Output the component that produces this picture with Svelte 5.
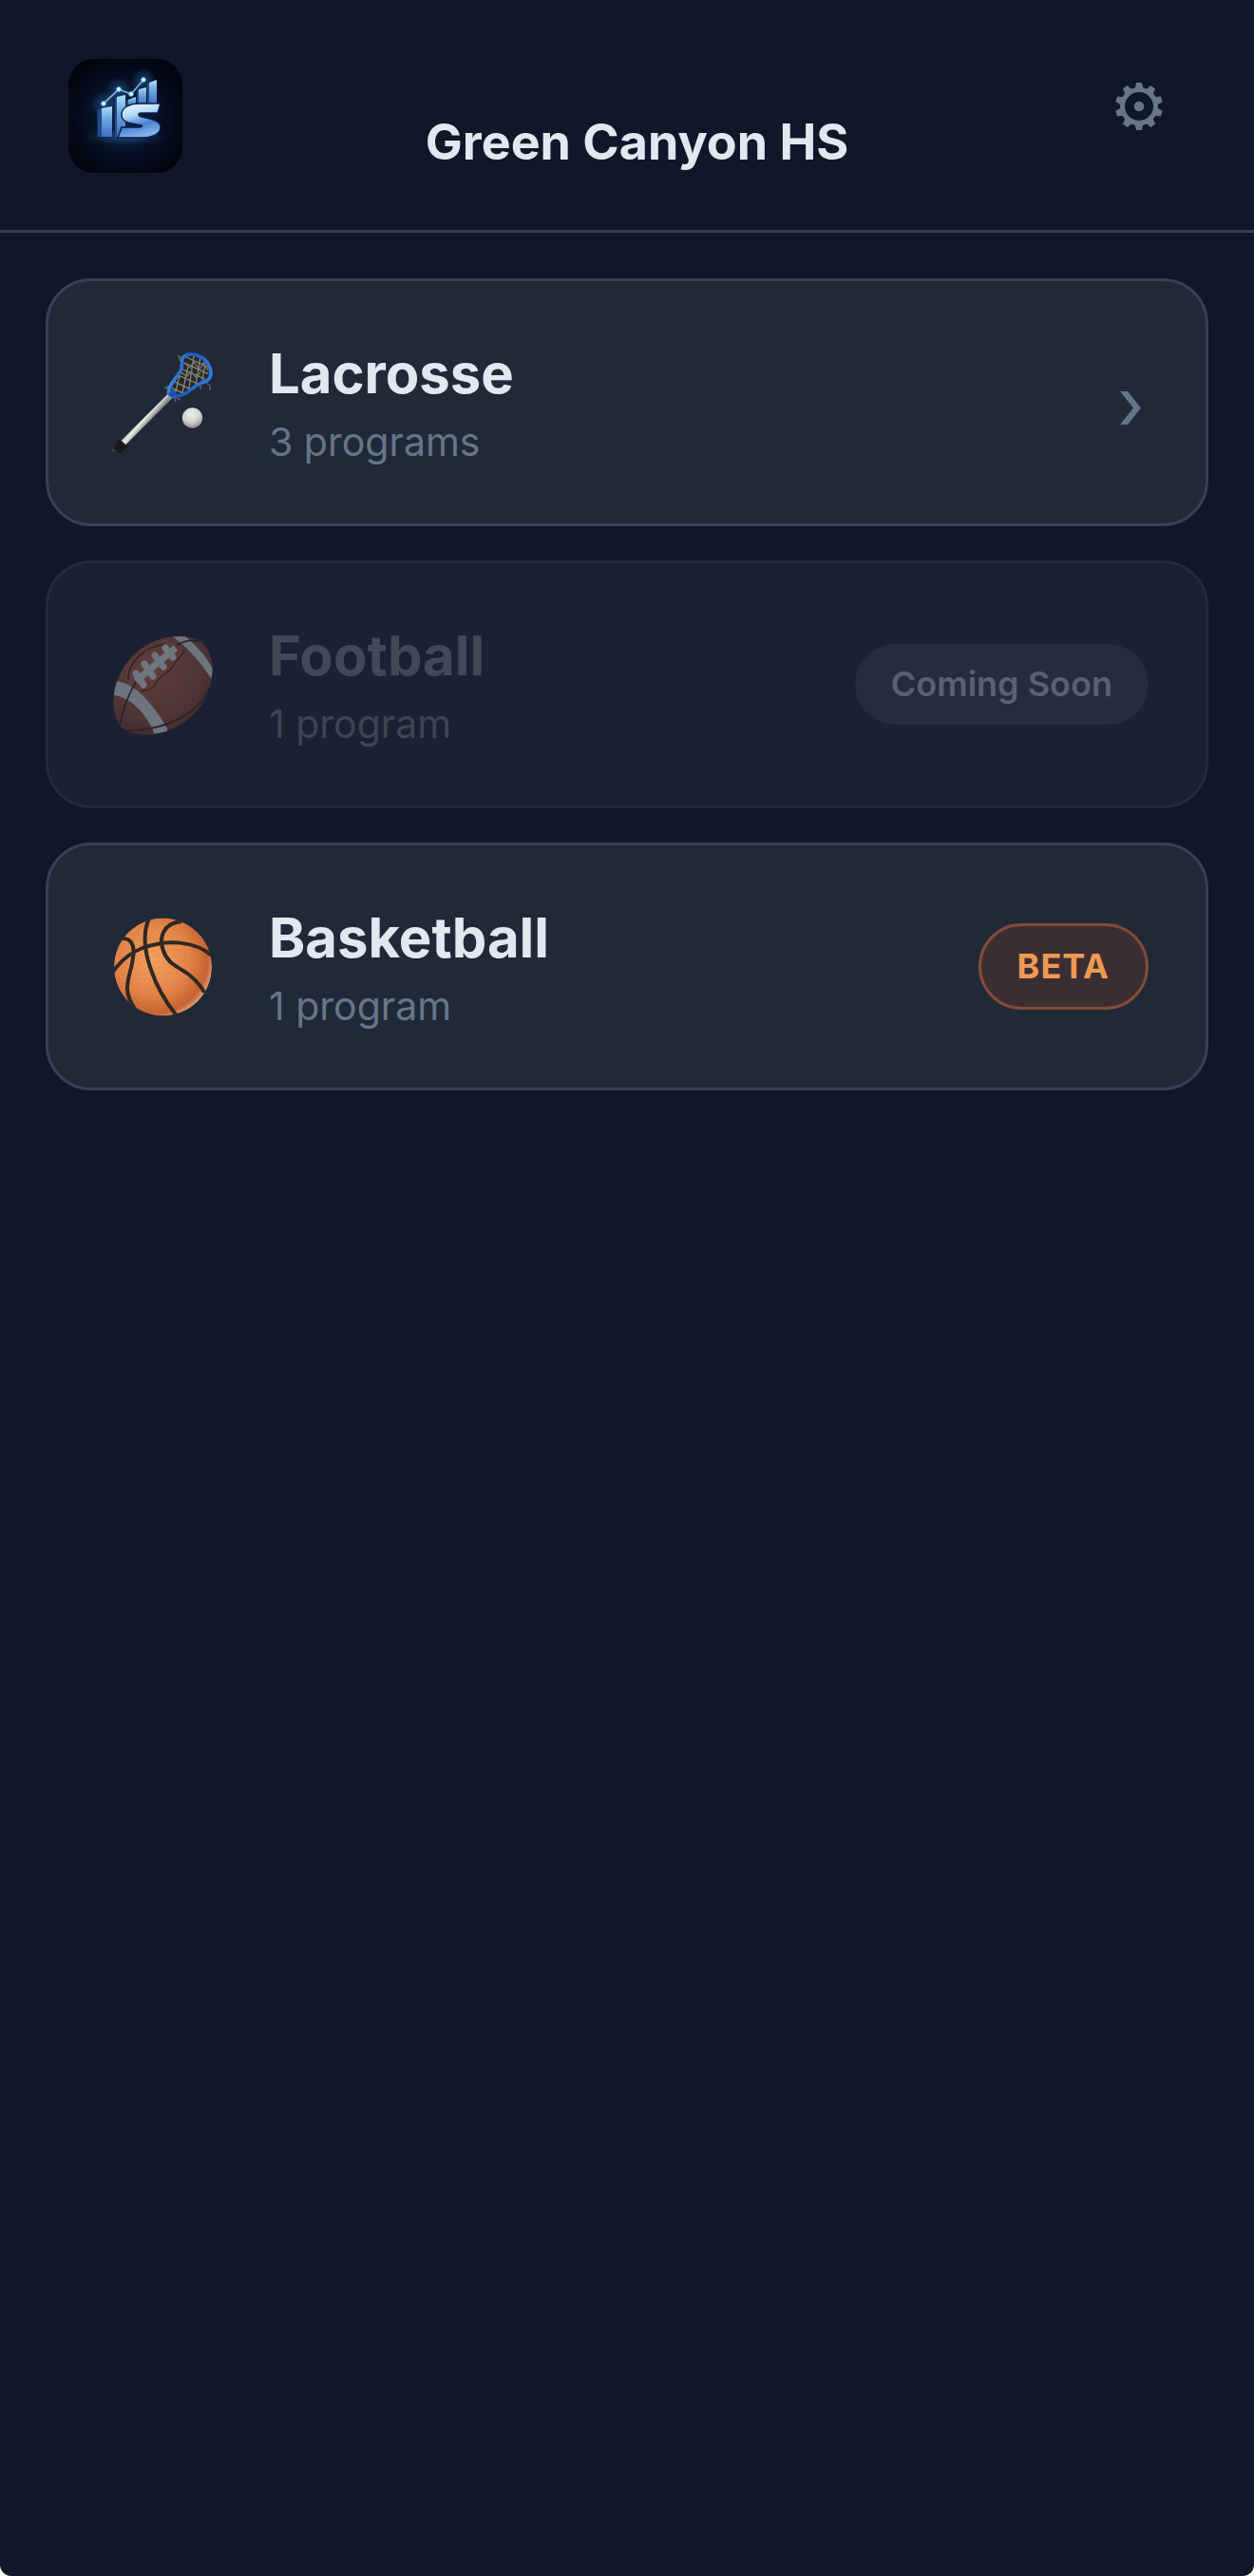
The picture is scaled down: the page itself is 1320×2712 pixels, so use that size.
<script>
  const sports = [
    { id: 'lacrosse', name: 'Lacrosse', programs: 3, status: 'open' },
    { id: 'football', name: 'Football', programs: 1, status: 'soon' },
    { id: 'basketball', name: 'Basketball', programs: 1, status: 'beta' }
  ];

  const gearTeeth = [0, 36, 72, 108, 144, 180, 216, 252, 288, 324];

  /**
   * Label under the sport name
   * @param {number} count
   */
  function programLabel(count) {
    return count === 1 ? '1 program' : `${count} programs`;
  }
</script>

<div class="app">
  <header class="header">
    <svg class="logo" viewBox="0 0 120 120" role="img" aria-label="IS logo">
      <defs>
        <radialGradient id="logo-bg" cx="50%" cy="52%" r="58%">
          <stop offset="0" stop-color="#10294f" />
          <stop offset="0.5" stop-color="#07112a" />
          <stop offset="1" stop-color="#03040d" />
        </radialGradient>
        <linearGradient id="logo-bar" x1="0" y1="0" x2="0" y2="1">
          <stop offset="0" stop-color="#b4def6" />
          <stop offset="0.4" stop-color="#6ba8e2" />
          <stop offset="1" stop-color="#3f6fbd" />
        </linearGradient>
        <linearGradient id="logo-s" x1="0" y1="0" x2="0.3" y2="1">
          <stop offset="0" stop-color="#f2fbff" />
          <stop offset="0.4" stop-color="#b5dbf7" />
          <stop offset="0.7" stop-color="#4a82cf" />
          <stop offset="1" stop-color="#7fb0e8" />
        </linearGradient>
        <radialGradient id="logo-glow">
          <stop offset="0" stop-color="#3f86d8" stop-opacity="0.4" />
          <stop offset="1" stop-color="#3f86d8" stop-opacity="0" />
        </radialGradient>
      </defs>
      <rect width="120" height="120" rx="27" fill="url(#logo-bg)" />
      <ellipse cx="60" cy="82" rx="42" ry="9" fill="url(#logo-glow)" />
      <circle cx="38" cy="48" r="15" fill="url(#logo-glow)" />
      <circle cx="53" cy="33" r="14" fill="url(#logo-glow)" />
      <circle cx="79" cy="23" r="14" fill="url(#logo-glow)" />
      <g fill="#1e4b8e">
        <path d="M30.500 54l5-2v30h-5zM49 41l3-1v40l-3 2zM61 44l2-1v8h-2zM72 33l2-1v15h-2zM83 26l2-1v22h-2z" />
      </g>
      <g fill="url(#logo-bar)">
        <path d="M35 52l11-2v32H35z" />
        <path d="M51 40l9-2v44h-9z" />
        <path d="M63 43l8-3v10h-8z" />
        <path d="M74 32l8-2v18h-8z" />
        <path d="M85 25l8-3v26h-8z" />
      </g>
      <path d="M97 47H75C63 47 55 52 56 60c1 7 9 8 19 9.500 4 .5 3 2.500-1 2.500H56l-4 11h27c11 0 18-5 18-11 0-7-9-8.500-20-11-4-1-4-4 0-4h17z" fill="url(#logo-s)" stroke="#0a1e49" stroke-width="1.500" />
      <path d="M37 47L53 32l13 5 13-15" fill="none" stroke="#69b4de" stroke-width="1.800" />
      <g fill="#d5ffff" stroke="#6cc7ee">
        <circle cx="37" cy="47" r="2.300" />
        <circle cx="53" cy="32" r="2.300" />
        <circle cx="66" cy="37" r="2.300" />
        <circle cx="79" cy="22" r="2.300" />
      </g>
    </svg>

    <h1 class="title">Green Canyon HS</h1>

    <button class="settings" type="button" aria-label="Settings">
      <svg viewBox="-26 -26 52 52" aria-hidden="true">
        {#each gearTeeth as angle}
          <path d="M-4.500-18L-3-25H3L4.500-18z" transform="rotate({angle})" />
        {/each}
        <circle class="gear-ring" r="17.500" />
        <circle r="5.300" />
      </svg>
    </button>
  </header>

  <main class="sports">
    {#each sports as sport (sport.id)}
      <button class="card" class:disabled={sport.status === 'soon'} type="button" disabled={sport.status === 'soon'}>
        <span class="icon">
          {#if sport.id === 'lacrosse'}
            <svg viewBox="1 3 140 140" aria-hidden="true">
              <defs>
                <linearGradient id="shaft" gradientUnits="userSpaceOnUse" x1="50" y1="87" x2="57" y2="93">
                  <stop offset="0" stop-color="#b8b8bc" />
                  <stop offset="0.35" stop-color="#eeeeef" />
                  <stop offset="1" stop-color="#8b898c" />
                </linearGradient>
                <linearGradient id="head" x1="0" y1="0" x2="1" y2="0.3">
                  <stop offset="0" stop-color="#58aafa" />
                  <stop offset="0.5" stop-color="#1c57bd" />
                  <stop offset="1" stop-color="#317be3" />
                </linearGradient>
                <radialGradient id="ball" cx="45%" cy="30%" r="70%">
                  <stop offset="0" stop-color="#f0eff0" />
                  <stop offset="0.6" stop-color="#d2d0d0" />
                  <stop offset="1" stop-color="#8d8b8d" />
                </radialGradient>
                <clipPath id="net">
                  <path d="M96 23c8-2 18 3 22 11 3 7 2 13-3 15-9 3-14 11-22 14-5 1-11 0-12-5-1-8 12-16 13-25 1-4-1-8 2-10z" />
                </clipPath>
              </defs>
              <path d="M22 120l-3 4" stroke="#424b59" stroke-width="3" />
              <path d="M25 114l8 5-7 6-5-4z" fill="#191919" stroke="#191919" stroke-width="3" />
              <path d="M30 115L80 65" stroke="url(#shaft)" stroke-width="6.500" />
              <path d="M90 30l-2-6 4 2M91 36l-2-3M79 60l-5-3 3-1M80 63l-5-1M84 68l1 4M86 68l4 2M111 52v7M117 52l4 3v5" fill="none" stroke="#605f57" stroke-width="1.500" />
              <g clip-path="url(#net)">
                <path d="M76 18h46v50H76z" fill="#25292c" />
                <path d="M75 55l40 18M78 48l35 17M83 42l34 15M88 36l32 14M92 30l30 14M94 24l26 12M83 68l6-23M91 67l7-32M98 64l6-40M105 60l6-36M112 56l5-32" stroke="#8f8a7a" stroke-width="1.300" />
                <path d="M94 31l6 5 4-6 6 8 4-7 6 9M90 41l7 4 4-5 6 7 4-6" fill="none" stroke="#77766d" stroke-width="1.500" />
              </g>
              <path d="M94 24c7-5 22 0 26 10 4 8 2 15-5 17-11 3-15 11-24 14-6 2-12 2-13-2-2-8 9-17 13-25 2-6-1-11 3-14z" fill="none" stroke="url(#head)" stroke-width="3.600" />
              <path d="M77 64l5-6 5 7-6 2z" fill="#1c51b0" />
              <circle cx="102.500" cy="89" r="10.700" fill="url(#ball)" />
            </svg>
          {:else if sport.id === 'football'}
            <svg viewBox="1 0 140 140" aria-hidden="true">
              <defs>
                <radialGradient id="leather" cx="40%" cy="35%" r="75%">
                  <stop offset="0" stop-color="#a35a42" />
                  <stop offset="0.6" stop-color="#84493a" />
                  <stop offset="1" stop-color="#502e2a" />
                </radialGradient>
                <clipPath id="football-shape">
                  <path d="M26 113C13 91 20 59 41 38 63 17 95 15 111 24c8 6 15 21 12 37-2 22-16 41-35 52-20 12-52 13-62 0z" />
                </clipPath>
              </defs>
              <g clip-path="url(#football-shape)">
                <path d="M10 10h120v120H10z" fill="url(#leather)" />
                <path d="M16 66c14-1 24 6 33 14 11 11 20 23 27 36v10H64c-6-20-24-45-50-46zM79 17l15 1c14 12 26 25 31 38l-3 7C111 46 98 31 79 17z" fill="#bec8ca" />
                <path d="M26 112c4-18 9-32 17-45M86 28c7-4 15-6 23-4" fill="none" stroke="#202331" stroke-width="1.500" />
                <path d="M27 118c21 1 44-3 61-12 20-10 32-26 36-43" fill="none" stroke="#4a2523" stroke-width="2" />
              </g>
              <path d="M35 65c-1-20 18-35 39-38M48 76c5 1 13-1 17-9 4-9 15-9 19-20 3-6 10-8 9-14" fill="none" stroke="#4a2523" stroke-width="1.500" />
              <path d="M43 66L85 31" stroke="#c1cbce" stroke-width="7" />
              <path d="M43 58l8 12M52 48l9 13M63 39l9 12M74 31l8 10" stroke="#c1cbce" stroke-width="7" stroke-linecap="round" />
            </svg>
          {:else}
            <svg viewBox="1 -2 140 140" aria-hidden="true">
              <defs>
                <radialGradient id="rubber" cx="40%" cy="42%" r="62%">
                  <stop offset="0" stop-color="#f5a160" />
                  <stop offset="0.6" stop-color="#e38449" />
                  <stop offset="0.9" stop-color="#c6632f" />
                  <stop offset="1" stop-color="#df9871" />
                </radialGradient>
                <clipPath id="basketball-shape"><circle cx="71.500" cy="68" r="51.500" /></clipPath>
                <pattern id="pebbles" width="6" height="6" patternUnits="userSpaceOnUse">
                  <path d="M1 1l1 2M4 3l1 2" stroke="#b75e32" stroke-width="1" opacity="0.300" />
                </pattern>
              </defs>
              <g clip-path="url(#basketball-shape)">
                <circle cx="71.500" cy="68" r="51.500" fill="url(#rubber)" />
                <circle cx="71.500" cy="68" r="49" fill="url(#pebbles)" />
                <g fill="none" stroke="#302824" stroke-width="4">
                  <path d="M19 73c9-13 18-20 31-25 26-9 54-8 73 8" />
                  <path d="M57 17c-7 14-5 35 2 54 6 18 14 32 26 47" />
                  <path d="M28 38c11-1 14 9 12 20-1 11-6 21-6 32 0 8 3 15 8 22" />
                  <path d="M91 20c-20 2-24 18-19 31 5 15 17 17 28 26 7 6 12 11 15 18" />
                </g>
              </g>
            </svg>
          {/if}
        </span>

        <span class="info">
          <span class="name">{sport.name}</span>
          <span class="count">{programLabel(sport.programs)}</span>
        </span>

        {#if sport.status === 'soon'}
          <span class="badge soon">Coming Soon</span>
        {:else if sport.status === 'beta'}
          <span class="badge beta">BETA</span>
        {:else}
          <svg class="chevron" viewBox="0 0 22 35" aria-hidden="true">
            <path d="M0 0h8l14 17.500L8 35H0l14-17.500z" />
          </svg>
        {/if}
      </button>
    {/each}
  </main>
</div>

<style>
  :global(body) {
    background: #fff;
  }

  .app {
    display: flex;
    flex-direction: column;
    min-height: 100vh;
    background: #111628;
    border-radius: 0 0 12px 12px;
    color: #e2e8f0;
    font-family: Inter, Roboto, sans-serif;
  }

  .header {
    display: grid;
    grid-template-columns: 144px 1fr 135px;
    align-items: start;
    padding: 62px 60px 60px 72px;
    border-bottom: 3px solid #373f50;
  }

  .logo {
    width: 120px;
    height: 120px;
  }

  .title {
    margin: 0;
    padding-top: 56px;
    font-size: 52px;
    font-weight: 700;
    line-height: 64px;
    text-align: center;
  }

  .settings {
    display: flex;
    justify-content: center;
    justify-self: end;
    width: 123px;
    padding: 24px 0;
    background: none;
    border: none;
    cursor: pointer;
  }

  .settings svg {
    width: 52px;
    height: 52px;
    fill: #687489;
  }

  .settings .gear-ring {
    fill: none;
    stroke: #687489;
    stroke-width: 5;
  }

  .sports {
    display: flex;
    flex-direction: column;
    gap: 36px;
    padding: 48px;
  }

  .card {
    display: flex;
    align-items: center;
    gap: 52px;
    min-height: 261px;
    padding: 48px 60px;
    background: #202938;
    border: 3px solid #374151;
    border-radius: 48px;
    color: inherit;
    font-family: inherit;
    text-align: left;
    cursor: pointer;
  }

  .card.disabled {
    background: #1b2032;
    border-color: #252b3d;
    cursor: default;
  }

  .disabled .icon {
    opacity: 0.5;
  }

  .disabled .name {
    color: #424858;
  }

  .disabled .count {
    color: #3d4455;
  }

  .icon {
    display: flex;
    flex: none;
    justify-content: center;
    width: 120px;
  }

  .icon svg {
    flex: none;
    width: 140px;
    height: 140px;
  }

  .info {
    display: flex;
    flex: 1;
    flex-direction: column;
    gap: 6px;
    padding-top: 4px;
  }

  .name {
    font-size: 58px;
    font-weight: 700;
    line-height: 72px;
  }

  .count {
    color: #687489;
    font-size: 41px;
    line-height: 60px;
  }

  .badge {
    padding: 20px 38px;
    border-radius: 48px;
    font-size: 36px;
    font-weight: 600;
    line-height: 45px;
    white-space: nowrap;
  }

  .soon {
    background: #242c3e;
    color: #5a6173;
  }

  .beta {
    background: #3b2e33;
    border: 3px solid #824b36;
    color: #ee9a53;
    font-weight: 700;
    letter-spacing: 1px;
  }

  .chevron {
    width: 22px;
    height: 35px;
    margin: 12px 8px 0 0;
    fill: #687489;
  }
</style>
